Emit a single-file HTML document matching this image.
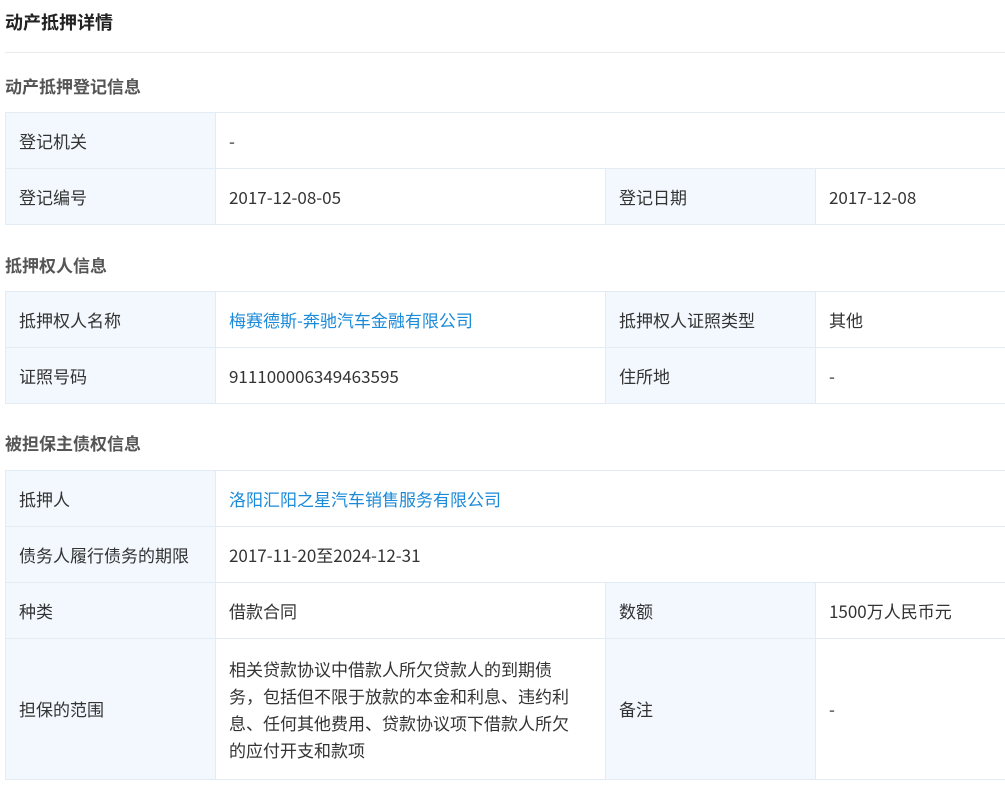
<!DOCTYPE html>
<html><head><meta charset="utf-8"><style>
*{margin:0;padding:0;box-sizing:border-box}
body{width:1005px;height:786px;overflow:hidden;background:#fff;font-family:"Noto Sans CJK SC","Liberation Sans",sans-serif;color:#333}
.title{position:absolute;left:5px;top:9px;font-size:18px;font-weight:bold;color:#222;line-height:26px}
.hr{position:absolute;left:5px;right:0;top:52px;border-top:1px solid #eaeaea}
.h{position:absolute;left:5px;font-size:17px;font-weight:bold;color:#555;line-height:24px}
table{position:absolute;left:5px;width:1005px;border-collapse:collapse;table-layout:fixed}
td{border:1px solid #e3ecf4;height:56px;padding:0 13px;font-size:17px;line-height:24px;vertical-align:middle;color:#333}
td.l{background:#f2f8fd}
a{color:#1a8ad9;text-decoration:none}
</style></head><body>
<div class="title">动产抵押详情</div>
<div class="hr"></div>
<div class="h" style="top:74px">动产抵押登记信息</div>
<table style="top:112px"><colgroup><col style="width:210px"><col style="width:390px"><col style="width:210px"><col></colgroup>
<tr><td class="l">登记机关</td><td colspan="3">-</td></tr>
<tr><td class="l">登记编号</td><td>2017-12-08-05</td><td class="l">登记日期</td><td>2017-12-08</td></tr>
</table>
<div class="h" style="top:253px">抵押权人信息</div>
<table style="top:291px"><colgroup><col style="width:210px"><col style="width:390px"><col style="width:210px"><col></colgroup>
<tr><td class="l">抵押权人名称</td><td><a>梅赛德斯-奔驰汽车金融有限公司</a></td><td class="l">抵押权人证照类型</td><td>其他</td></tr>
<tr><td class="l">证照号码</td><td>911100006349463595</td><td class="l">住所地</td><td>-</td></tr>
</table>
<div class="h" style="top:431px">被担保主债权信息</div>
<table style="top:470px"><colgroup><col style="width:210px"><col style="width:390px"><col style="width:210px"><col></colgroup>
<tr><td class="l">抵押人</td><td colspan="3"><a>洛阳汇阳之星汽车销售服务有限公司</a></td></tr>
<tr><td class="l">债务人履行债务的期限</td><td colspan="3">2017-11-20至2024-12-31</td></tr>
<tr><td class="l">种类</td><td>借款合同</td><td class="l">数额</td><td>1500万人民币元</td></tr>
<tr><td class="l" style="height:141px">担保的范围</td><td style="line-height:27px">相关贷款协议中借款人所欠贷款人的到期债<br>务，包括但不限于放款的本金和利息、违约利<br>息、任何其他费用、贷款协议项下借款人所欠<br>的应付开支和款项</td><td class="l">备注</td><td>-</td></tr>
</table>
</body></html>
